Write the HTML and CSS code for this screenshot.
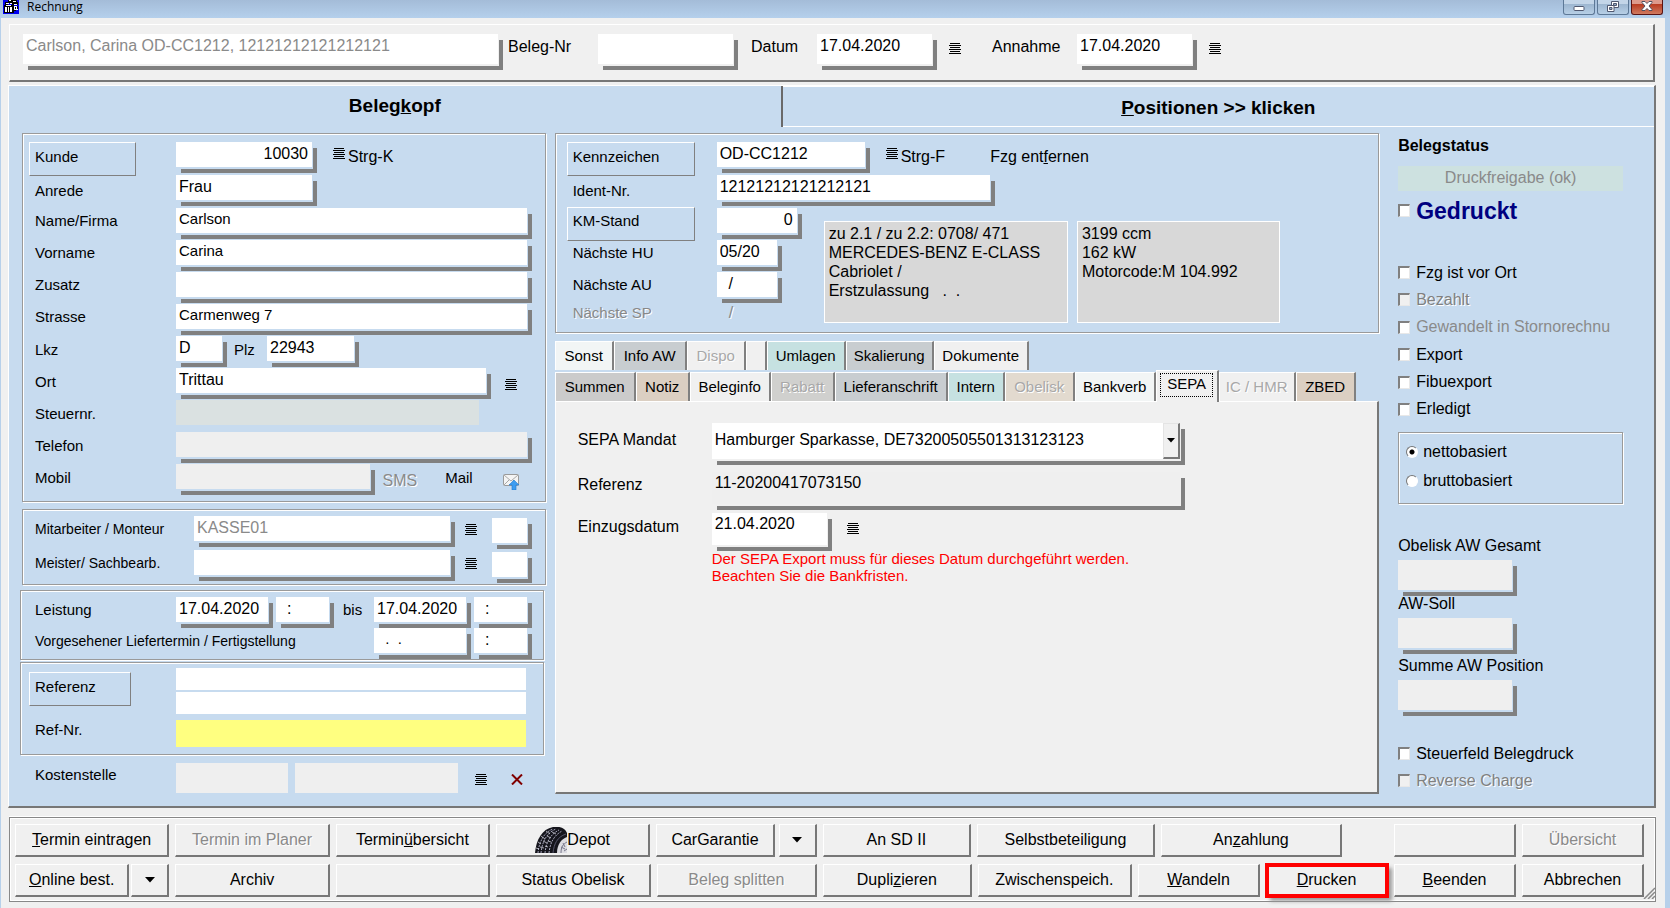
FILE: index.html
```
<!DOCTYPE html>
<html lang="de">
<head>
<meta charset="utf-8">
<title>Rechnung</title>
<link rel="stylesheet" href="styles.css">
</head>
<body>
<svg class="defs" aria-hidden="true">
  <symbol id="i-list" viewBox="0 0 12 11"><path d="M1 .5h10M0 2.5h12M1 4.5h10M0 6.5h12M1 8.5h10M0 10.5h12" stroke="#000" fill="none"/></symbol>
  <symbol id="i-down" viewBox="0 0 10 6"><path d="M0 0h10L5 5.500z" fill="#000"/></symbol>
</svg>

<header class="titlebar">
  <svg class="app-icon" width="16" height="14" viewBox="0 0 16 14" aria-hidden="true">
    <rect width="16" height="14" fill="#0000f0"/>
    <path d="M5 0h4v3h-4zM9 0h5v2h1v3h-6zM2 2h3v3h-3z" fill="#000"/>
    <path d="M6 0h2v1h-2zM10 1h3v1h-3zM3 3h3v1h-3zM7 3h2v1h-2zM11 4h3v1h-3z" fill="#fff"/>
    <path d="M1 5h10v8h-10z" fill="#000"/>
    <path d="M2 7h2v5h-2zM5 7h1v5h-1zM7 7h2v5h-2zM3 5h5v1h-5zM11 6h4v4h-4z" fill="#fff"/>
    <path d="M12 7h1v2h-1zM14 6h1v3h-1zM10 10h3v1h-3z" fill="#000"/>
  </svg>
  <h1>Rechnung</h1>
  <div class="win-buttons">
    <button type="button" aria-label="Minimieren"><svg width="12" height="11" viewBox="0 0 12 11"><rect x="1" y="5.500" width="10" height="4" rx="1" fill="#fff" stroke="#505870"/></svg></button>
    <button type="button" aria-label="Wiederherstellen"><svg width="12" height="11" viewBox="0 0 12 11"><path d="M4.500 .5h7v6h-7z" fill="#fff" stroke="#505870"/><path d="M6.500 2.500h3v2h-3z" fill="#8fa8c4" stroke="#505870"/><path d="M.5 4.500h6.500v6h-6.500z" fill="#fff" stroke="#505870"/><path d="M2.500 6.500h2.500v2h-2.500z" fill="#8fa8c4" stroke="#505870"/></svg></button>
    <button type="button" class="close" aria-label="Schließen"><svg width="12" height="10" viewBox="0 0 12 10"><path d="M1 .5h3l2 2 2-2h3v1l-3 3.500 3 3.500v1h-3l-2-2-2 2h-3v-1l3-3.500-3-3.500z" fill="#fff" stroke="#505060"/></svg></button>
  </div>
</header>

<form class="client">
  <section class="head-panel">
    <input class="field head-name" aria-label="Beleg" value="Carlson, Carina OD-CC1212, 12121212121212121" disabled>
    <label class="head-nr-label" for="belegnr">Beleg-Nr</label>
    <input class="field head-nr" id="belegnr">
    <label class="head-date-label" for="datum">Datum</label>
    <input class="field head-date" id="datum" value="17.04.2020">
    <button type="button" class="icon" aria-label="Datum wählen"><svg width="12" height="11"><use href="#i-list"/></svg></button>
    <label class="head-accept-label" for="annahme">Annahme</label>
    <input class="field head-date" id="annahme" value="17.04.2020">
    <button type="button" class="icon" aria-label="Annahme wählen"><svg width="12" height="11"><use href="#i-list"/></svg></button>
  </section>

  <main class="sheet">
    <nav class="main-tabs">
      <button type="button" class="tab-left">Beleg<u>k</u>opf</button>
      <button type="button" class="tab-right"><u>P</u>ositionen &gt;&gt; klicken</button>
    </nav>
    <div class="columns">
      <div class="col-left">
        <section class="group customer">
          <div class="row tall"><div class="cap"><button type="button" class="cap-btn">Kunde</button></div><input class="field w-136 right" aria-label="Kundennummer" value="10030"><button type="button" class="shortcut"><svg width="12" height="11"><use href="#i-list"/></svg>Strg-K</button></div>
          <div class="row tall"><label class="cap low" for="anrede">Anrede</label><input class="field w-136" id="anrede" value="Frau"></div>
          <div class="row"><label class="cap" for="name">Name/Firma</label><input class="field grow small" id="name" value="Carlson"></div>
          <div class="row"><label class="cap" for="vorname">Vorname</label><input class="field grow small" id="vorname" value="Carina"></div>
          <div class="row"><label class="cap" for="zusatz">Zusatz</label><input class="field grow small" id="zusatz"></div>
          <div class="row"><label class="cap" for="strasse">Strasse</label><input class="field grow small" id="strasse" value="Carmenweg 7"></div>
          <div class="row"><label class="cap mid" for="lkz">Lkz</label><input class="field w-46" id="lkz" value="D"><label class="plz-label" for="plz">Plz</label><input class="field w-87" id="plz" value="22943"></div>
          <div class="row"><label class="cap mid" for="ort">Ort</label><input class="field grow" id="ort" value="Trittau"><button type="button" class="icon city" aria-label="Ort wählen"><svg width="12" height="11"><use href="#i-list"/></svg></button></div>
          <div class="row"><label class="cap mid" for="steuernr">Steuernr.</label><input class="field flat tax" id="steuernr" disabled></div>
          <div class="row"><label class="cap mid" for="telefon">Telefon</label><input class="field grow gray" id="telefon"></div>
          <div class="row"><label class="cap mid" for="mobil">Mobil</label><input class="field grow gray" id="mobil"><button type="button" class="text-btn sms" disabled>SMS</button><span class="mail-label">Mail</span><button type="button" class="icon mail" aria-label="Mail senden"><svg width="18" height="17" viewBox="0 0 18 17"><rect x=".5" y="1.500" width="15" height="11" rx="1" fill="#f4f4f4" stroke="#9a9a9a"/><path d="M1 2l7 6 7-6M1 12l5-5M15 12l-5-5" fill="none" stroke="#a8a8a8"/><path d="M11 7l5 5h-3v5h-4v-5h-3z" fill="#3d9cf0" stroke="#1f7ad0" stroke-width=".6"/></svg></button></div>
        </section>

        <section class="group staff">
          <div class="row"><label class="cap wide" for="monteur">Mitarbeiter / Monteur</label><input class="field grow" id="monteur" value="KASSE01" disabled><button type="button" class="icon" aria-label="Mitarbeiter wählen"><svg width="12" height="11"><use href="#i-list"/></svg></button><input class="field w-35" aria-label="Kürzel Mitarbeiter"></div>
          <div class="row"><label class="cap wide" for="meister">Meister/ Sachbearb.</label><input class="field grow" id="meister"><button type="button" class="icon" aria-label="Meister wählen"><svg width="12" height="11"><use href="#i-list"/></svg></button><input class="field w-35" aria-label="Kürzel Meister"></div>
        </section>

        <section class="group service">
          <div class="row"><label class="cap" for="leistung">Leistung</label><input class="field w-92" id="leistung" value="17.04.2020"><input class="field w-53 time" aria-label="Uhrzeit von" value="  :"><label class="bis" for="bis">bis</label><input class="field w-92" id="bis" value="17.04.2020"><input class="field w-53 time" aria-label="Uhrzeit bis" value="  :"></div>
          <div class="row"><label class="cap delivery" for="termin">Vorgesehener Liefertermin / Fertigstellung</label><input class="field w-92 small" id="termin" value="  .  ."><input class="field w-53 time" aria-label="Uhrzeit Liefertermin" value="  :"></div>
        </section>

        <section class="group reference">
          <div class="ref-row"><div class="cap"><button type="button" class="cap-btn ref">Referenz</button></div><div class="ref-inputs"><input class="field flat" aria-label="Referenz Zeile 1"><input class="field flat" aria-label="Referenz Zeile 2"></div></div>
          <div class="ref-row"><label class="cap" for="refnr">Ref-Nr.</label><input class="field flat grow yellow" id="refnr"></div>
        </section>

        <div class="cost-row">
          <label class="cap" for="kosten">Kostenstelle</label>
          <input class="field flat gray cost-code" id="kosten"><input class="field flat gray grow" aria-label="Bezeichnung Kostenstelle">
          <button type="button" class="icon" aria-label="Kostenstelle wählen"><svg width="12" height="11"><use href="#i-list"/></svg></button>
          <button type="button" class="icon clear" aria-label="Kostenstelle löschen"><svg width="12" height="11" viewBox="0 0 12 11"><path d="M1 .5l10 10M11 .5L1 10.500" stroke="#800000" stroke-width="2" fill="none"/></svg></button>
        </div>
      </div>

      <div class="col-mid">
        <section class="group vehicle">
          <div class="row tall"><div class="cap"><button type="button" class="cap-btn">Kennzeichen</button></div><input class="field w-148" aria-label="Kennzeichen" value="OD-CC1212"><button type="button" class="shortcut"><svg width="12" height="11"><use href="#i-list"/></svg>Strg-F</button><button type="button" class="text-btn remove">Fzg ent<u>f</u>ernen</button></div>
          <div class="row tall"><label class="cap low" for="ident">Ident-Nr.</label><input class="field w-273" id="ident" value="12121212121212121"></div>
          <div class="vehicle-body">
            <div class="vehicle-dates">
              <div class="row"><div class="cap"><button type="button" class="cap-btn km">KM-Stand</button></div><input class="field w-80 right" aria-label="KM-Stand" value="0"></div>
              <div class="row"><label class="cap" for="hu">Nächste HU</label><input class="field w-60" id="hu" value="05/20"></div>
              <div class="row"><label class="cap" for="au">Nächste AU</label><input class="field w-60" id="au" value="  /"></div>
              <div class="row"><span class="cap dim">Nächste SP</span><span class="dim sp">/</span></div>
            </div>
            <div class="info info-car">zu 2.1 / zu 2.2: 0708/ 471<br>MERCEDES-BENZ E-CLASS<br>Cabriolet /<br>Erstzulassung &nbsp; . &nbsp;.</div>
            <div class="info info-engine">3199 ccm<br>162 kW<br>Motorcode:M 104.992</div>
          </div>
        </section>

        <div class="tabs">
          <nav class="tab-row first">
            <button type="button" class="tab pale">Sonst</button><button type="button" class="tab steel">Info AW</button><button type="button" class="tab" disabled>Dispo</button><button type="button" class="tab" aria-label="Leer"></button><button type="button" class="tab mint">Umlagen</button><button type="button" class="tab steel">Skalierung</button><button type="button" class="tab">Dokumente</button>
          </nav>
          <nav class="tab-row second">
            <button type="button" class="tab silver">Summen</button><button type="button" class="tab tan">Notiz</button><button type="button" class="tab">Beleginfo</button><button type="button" class="tab silver" disabled>Rabatt</button><button type="button" class="tab steel">Lieferanschrift</button><button type="button" class="tab mint">Intern</button><button type="button" class="tab sand" disabled>Obelisk</button><button type="button" class="tab pale">Bankverb</button><button type="button" class="tab active"><span>SEPA</span></button><button type="button" class="tab" disabled>IC / HMR</button><button type="button" class="tab tan">ZBED</button>
          </nav>
          <section class="tab-page">
            <label for="mandat">SEPA Mandat</label>
            <div class="mandate"><select class="field" id="mandat"><option>Hamburger Sparkasse, DE73200505501313123123</option></select><span class="drop" aria-hidden="true"><svg width="8" height="5" viewBox="0 0 10 6"><use href="#i-down"/></svg></span></div>
            <label for="sepa-ref">Referenz</label>
            <input class="field gray sepa-ref" id="sepa-ref" value="11-20200417073150">
            <label for="einzug">Einzugsdatum</label>
            <div class="debit"><input class="field" id="einzug" value="21.04.2020"><button type="button" class="icon" aria-label="Einzugsdatum wählen"><svg width="12" height="11"><use href="#i-list"/></svg></button></div>
            <p class="warning">Der SEPA Export muss für dieses Datum durchgeführt werden.<br>Beachten Sie die Bankfristen.</p>
          </section>
        </div>
      </div>

      <aside class="col-right">
        <h2>Belegstatus</h2>
        <div class="release">Druckfreigabe (ok)</div>
        <label class="check printed"><input type="checkbox">Gedruckt</label>
        <div class="checks">
          <label class="check"><input type="checkbox">Fzg ist vor Ort</label>
          <label class="check emboss"><input type="checkbox" disabled>Bezahlt</label>
          <label class="check off"><input type="checkbox">Gewandelt in Stornorechnu</label>
          <label class="check"><input type="checkbox">Export</label>
          <label class="check"><input type="checkbox">Fibuexport</label>
          <label class="check"><input type="checkbox">Erledigt</label>
        </div>
        <div class="group basis">
          <label><input type="radio" name="basis" checked>nettobasiert</label>
          <label><input type="radio" name="basis">bruttobasiert</label>
        </div>
        <div class="sums">
          <label for="awg">Obelisk AW Gesamt</label><input class="field gray" id="awg">
          <label for="aws">AW-Soll</label><input class="field gray" id="aws">
          <label class="gap" for="awp">Summe AW Position</label><input class="field gray" id="awp">
        </div>
        <label class="check"><input type="checkbox">Steuerfeld Belegdruck</label>
        <label class="check emboss"><input type="checkbox" disabled>Reverse Charge</label>
      </aside>
    </div>
  </main>

  <footer class="actions">
    <div class="action-row">
      <button type="button" class="btn f-154"><span><u>T</u>ermin eintragen</span></button>
      <button type="button" class="btn f-154" disabled>Termin im Planer</button>
      <button type="button" class="btn f-154"><span>Termin<u>ü</u>bersicht</span></button>
      <button type="button" class="btn f-154 depot"><svg width="32" height="26" viewBox="0 0 32 26" aria-hidden="true">
        <path d="M0 26C1 13 7 2 18 0c7-1 12 1 14 6v20z" fill="#15151c"/>
        <path d="M22 26c0-8 4-14 10-16v16z" fill="#dcdce2"/>
        <path d="M26 26c0-6 2-9 6-11M28 16l2 4M26 20l4 2M29 24l3-2" fill="none" stroke="#77778a"/>
        <path d="M3 26C4 15 9 5 18 2M6 26C7 16 11 6 21 2M10 26C11 17 14 8 24 3M14 26C15 17 18 9 27 4" fill="none" stroke="#a4a4ba" stroke-dasharray="2 1"/>
        <path d="M18 26C19 17 22 10 31 7" fill="none" stroke="#55556a"/>
        <path d="M1 21l3 1M3 15l3 2M6 9l4 3M11 4l4 3M5 20l4 1M8 14l4 2M12 9l4 2M17 5l4 2M10 19l3 1M13 14l3 1" stroke="#e0e0ea" stroke-width=".7" fill="none"/>
      </svg>Depot</button>
      <div class="split f-163"><button type="button" class="btn f-121">CarGarantie</button><button type="button" class="btn arrow" aria-label="CarGarantie Auswahl"><svg width="10" height="6"><use href="#i-down"/></svg></button></div>
      <button type="button" class="btn f-148">An SD II</button>
      <button type="button" class="btn f-178">Selbstbeteiligung</button>
      <button type="button" class="btn f-181"><span>An<u>z</u>ahlung</span></button>
      <span class="spacer"></span>
      <button type="button" class="btn f-121" aria-label="Frei"></button>
      <button type="button" class="btn f-121" disabled>Übersicht</button>
    </div>
    <div class="action-row">
      <div class="split tight f-157"><button type="button" class="btn f-121"><span><u>O</u>nline best.</span></button><button type="button" class="btn arrow" aria-label="Online Auswahl"><svg width="10" height="6"><use href="#i-down"/></svg></button></div>
      <button type="button" class="btn f-154">Archiv</button>
      <button type="button" class="btn f-154" aria-label="Frei"></button>
      <button type="button" class="btn f-154">Status Obelisk</button>
      <button type="button" class="btn f-160" disabled>Beleg splitten</button>
      <button type="button" class="btn f-148"><span>Dupli<u>z</u>ieren</span></button>
      <button type="button" class="btn f-154">Zwischenspeich.</button>
      <button type="button" class="btn f-121"><span><u>W</u>andeln</span></button>
      <button type="button" class="btn f-121 marked"><span><u>D</u>rucken</span></button>
      <button type="button" class="btn f-121"><span><u>B</u>eenden</span></button>
      <button type="button" class="btn f-121">Abbrechen</button>
    </div>
    <svg class="grip" width="12" height="12" viewBox="0 0 12 12" aria-hidden="true"><path d="M1 12L12 1M5 12l7-7M9 12l3-3" stroke="#8a8a8a" stroke-width="1.500"/></svg>
  </footer>
</form>
</body>
</html>
```
FILE: styles.css
```
:root {
  --blue: #c7dbef;
  --face: #f0f0f0;
  --shade: #808080;
  --dark: #696969;
  --bg: var(--blue);
}

* { box-sizing: border-box; }

body {
  margin: 0;
  min-height: 100vh;
  display: flex;
  flex-direction: column;
  background: #b7d0ea;
  font: 16px/18px "Liberation Sans", Arial, sans-serif;
  color: #000;
}

button, input, select { font: inherit; color: inherit; margin: 0; border-radius: 0; }
button { background: none; border: 0; padding: 0; }
svg { display: block; flex: none; }
.defs { position: absolute; width: 0; height: 0; }

/* Title bar */
.titlebar {
  display: flex;
  align-items: flex-start;
  height: 18px;
  padding: 0 7px 0 3px;
  background: linear-gradient(#a4bcd8, #b5d0ec);
}
.titlebar h1 {
  flex: 1;
  margin: 0 0 0 8px;
  font: 12px/14px "Open Sans", "Noto Sans", sans-serif;
}
.win-buttons { display: flex; gap: 2px; }
.win-buttons button {
  display: flex;
  justify-content: center;
  width: 32px;
  height: 15px;
  padding-top: 1px;
  border: 1px solid #5d7896;
  border-top: 0;
  border-radius: 0 0 3px 3px;
  background: linear-gradient(#c3d5e8 30%, #9db6d0 31%, #b7cfe6);
}
.win-buttons .close {
  border-color: #5a1414;
  background: linear-gradient(#dd9a8c 30%, #b83c22 31%, #d07a60);
}

/* Client area */
.client {
  --bg: var(--face);
  flex: 1;
  margin: 0 5px 0 1px;
  padding: 6px 9px 0 7px;
  background: var(--face);
}

.field {
  min-width: 0;
  height: 25px;
  padding: 0 4px 1px 3px;
  border: 0;
  outline: 0;
  background: #fff;
  box-shadow: 1px 2px 0 var(--bg), 5px 6px 0 var(--shade);
}
.field:disabled { color: #8a8a8a; }
.field.small { font-size: 15px; padding-bottom: 4px; }
.field.flat { box-shadow: none; }
.field.gray { background: #efefef; }
.field.yellow { background: #ffff80; height: 27px; }
.field.right { text-align: right; }
.grow { flex: 1; }
.w-35 { width: 35px; }
.w-46 { width: 46px; }
.w-53 { width: 53px; }
.w-60 { width: 60px; }
.w-80 { width: 80px; }
.w-87 { width: 87px; }
.w-92 { width: 92px; }
.w-136 { width: 136px; }
.w-148 { width: 148px; }
.w-273 { width: 273px; }
.icon { display: flex; flex: none; }

.head-panel {
  display: flex;
  align-items: flex-start;
  height: 58px;
  margin: 0 1px;
  padding: 9px 13px;
  border: solid;
  border-width: 1px 2px 2px 1px;
  border-color: #fff #777 #777 #fff;
}
.head-panel .field { height: 30px; padding-bottom: 7px; }
.head-panel label { padding-top: 4px; }
.head-panel .icon { margin: 9px 0 0 17px; }
.head-name { width: 475px; }
.head-nr-label { width: 90px; margin-left: 10px; }
.head-nr { width: 135px; }
.head-date-label { width: 66px; margin-left: 18px; }
.head-date { width: 115px; }
.head-accept-label { width: 85px; margin-left: 31px; }

/* Main sheet */
.sheet {
  --bg: var(--blue);
  margin-top: 3px;
  padding-bottom: 12px;
  background: var(--blue);
  border: solid;
  border-width: 1px 2px 2px 1px;
  border-color: #fff #777 #777 #fff;
}
.main-tabs { display: flex; height: 41px; }
.main-tabs button { font-size: 19px; line-height: 22px; font-weight: bold; }
.main-tabs .tab-left { flex: 773 1 0; padding-bottom: 2px; border-right: 2px solid var(--dark); }
.main-tabs .tab-right { flex: 873 1 0; padding-top: 3px; border-bottom: 1px solid #fff; box-shadow: inset 0 1px 0 #fff; }

.columns {
  display: grid;
  grid-template-columns: minmax(0, 526fr) minmax(0, 834fr) minmax(0, 275fr);
  padding: 6px 0 0 11px;
}
.col-left { display: flex; flex-direction: column; }
.col-mid { display: flex; flex-direction: column; margin-left: 9px; }
.col-right { padding-left: 19px; }

.group { border: 1px solid #9a9a9a; box-shadow: inset 1px 1px 0 #fff, 1px 1px 0 #fff; }
.row { display: flex; height: 32px; }
.row.tall { height: 33px; }
.cap { flex: none; width: 141px; padding-top: 4px; font-size: 15px; white-space: nowrap; }
.cap.mid { padding-top: 5px; }
.cap.low { padding-top: 7px; }
.cap.wide { width: 159px; font-size: 14px; }
.cap.delivery { width: 339px; font-size: 14px; }
div.cap { padding-top: 0; }
.cap-btn {
  display: block;
  width: 107px;
  height: 34px;
  margin-left: -6px;
  padding: 0 0 4px 5px;
  text-align: left;
  border: 1px solid;
  border-color: #fff var(--shade) var(--shade) #fff;
}
.cap-btn.km { margin-top: -1px; padding-bottom: 6px; }
.shortcut { display: flex; gap: 3px; align-self: flex-start; margin: 6px 0 0 21px; }
.dim { color: #888; text-shadow: 1px 1px 0 #fff; }
.text-btn { align-self: flex-start; }
.text-btn:disabled { color: #8a8a8a; text-shadow: 1px 1px 0 #fff; }

.customer { margin-left: 2px; padding: 8px 18px 5px 12px; }
.plz-label { padding: 5px 0 0 12px; width: 45px; font-size: 15px; }
.icon.city { margin: 11px 10px 0 19px; }
.tax { width: 303px; }
.field.tax { background: #dae1e1; }
.sms { margin: 8px 28px 0 12px; }
.mail-label { padding-top: 5px; font-size: 15px; }
.icon.mail { margin: 9px 6px 0 30px; }

.staff { margin: 7px 0 0 2px; padding: 6px 18px 0 12px; }
.staff .row { height: 34px; }
.staff .icon { margin: 8px 15px 0; }
.staff .w-35 { margin-top: 2px; }

.service { margin: 5px 2px 0 0; padding: 6px 15px 0 14px; }
.service .row { height: 31px; }
.service .time { margin-left: 8px; padding-left: 2px; white-space: pre; }
.service input { white-space: pre; }
.bis { width: 45px; padding: 4px 0 0 14px; font-size: 15px; }

.reference { margin: 2px 2px 0 0; padding: 5px 17px 7px 14px; }
.ref-row { display: flex; }
.ref-row + .ref-row { margin-top: 6px; }
.cap-btn.ref { width: 102px; margin-top: 4px; }
.ref-inputs { display: flex; flex-direction: column; gap: 2px; flex: 1; }
.ref-inputs .field { height: 22px; }
.ref-row label.cap { padding-top: 1px; }

.cost-row { display: flex; padding: 8px 23px 0 15px; }
.cost-row .cap { padding-top: 3px; }
.cost-row .field { height: 30px; }
.cost-code { width: 112px; margin-right: 7px; }
.cost-row .icon { margin: 11px 0 0 17px; }
.cost-row .icon.clear { margin-left: 24px; }

/* Vehicle */
.vehicle { padding: 8px 98px 8px 17px; }
.vehicle .cap { width: 144px; }
.vehicle .cap-btn { width: 128px; }
.remove { margin: 6px 0 0 45px; }
.vehicle-body { display: flex; }
.vehicle-dates { width: 251px; flex: none; }
.vehicle-dates .row:last-child { height: 20px; }
.vehicle-dates .row:last-child .cap { padding-top: 0; }
.vehicle-dates .field { white-space: pre; }
.sp { padding-left: 12px; }
.info {
  height: 102px;
  margin-top: 13px;
  padding: 2px 4px;
  line-height: 19px;
  background: #d8d8d8;
  border: 1px solid #fff;
  white-space: nowrap;
}
.info-car { flex: 245 1 0; }
.info-engine { flex: 202 1 0; margin-left: 9px; }

/* Sub tabs */
.tabs { display: flex; flex-direction: column; flex: 1; margin-top: 8px; }
.tab-row { display: grid; height: 29px; }
.tab-row.first { grid-template-columns: 59px 73px 59px 21px 79px 88px 95px; }
.tab-row.second { margin-top: 2px; grid-template-columns: 81px 54px 81px 64px 113px 57px 70px 81px 63px 77px 60px; }
.tab {
  min-width: 0;
  font-size: 15px;
  white-space: nowrap;
  background: var(--face);
  border: solid;
  border-width: 1px 2px 0 1px;
  border-color: #fff var(--shade) #fff #fff;
}
.tab:disabled { color: #a8a8a8; text-shadow: 1px 1px 0 #fff; }
.tab.pale { background: #f2f5f5; }
.tab.steel { background: #c8cdd0; }
.tab.mint { background: #c6e1e1; }
.tab.silver { background: #cbcbcb; }
.tab.silver:disabled { background: #d0d0ce; }
.tab.tan { background: #dbcfc2; }
.tab.sand { background: #e2dacf; }
.tab.active { position: relative; z-index: 1; margin: -2px 0 -1px; padding-bottom: 3px; }
.tab.active span { display: inline-block; padding: 1px 6px 3px; border: 1px dotted #000; }
.tab-page {
  --bg: var(--face);
  flex: 1;
  display: grid;
  grid-template-columns: 134px minmax(0, 468px);
  grid-template-rows: 49px 41px 34px auto;
  align-content: start;
  padding: 21px 22px 0;
  background: var(--face);
  border: solid;
  border-width: 1px 2px 2px 1px;
  border-color: #fff #777 #777 #fff;
}
.tab-page label { padding-top: 8px; }
.tab-page label[for="sepa-ref"] { padding-top: 4px; }
.tab-page label[for="einzug"] { padding-top: 5px; }
.mandate { position: relative; height: 36px; }
.mandate select { appearance: none; width: 100%; height: 36px; padding-bottom: 2px; }
.drop {
  position: absolute;
  top: 0;
  right: 0;
  display: grid;
  place-items: center;
  width: 17px;
  height: 36px;
  background: var(--face);
  border: solid;
  border-width: 1px 2px 2px 1px;
  border-color: #e4e4e4 #777 #777 #e4e4e4;
  pointer-events: none;
}
.sepa-ref { height: 32px; padding-bottom: 10px; }
.debit { display: flex; }
.debit .field { width: 115px; height: 32px; padding-bottom: 10px; }
.debit .icon { margin: 10px 0 0 20px; }
.warning { grid-column: 2; margin: 3px 0 0; font-size: 15px; line-height: 17px; color: #f00; }

/* Status column */
.col-right h2 { margin: 4px 0 11px; font-size: 16px; line-height: 18px; }
.release {
  width: 225px;
  max-width: 100%;
  height: 25px;
  padding-top: 3px;
  text-align: center;
  color: #8a8a8a;
  background: #cde1e0;
}
.check { display: flex; align-items: center; gap: 6px; height: 27px; white-space: nowrap; }
.check.emboss { color: #808080; text-shadow: 1px 1px 0 #fff; }
.check.off { color: #8a8a8a; }
.check.printed { margin-top: 6px; font-size: 23px; font-weight: bold; color: #000080; }
.check input {
  appearance: none;
  width: 12px;
  height: 13px;
  background: #fff;
  border: solid;
  border-width: 2px 1px 1px 2px;
  border-color: var(--shade) #e8e8e8 #e8e8e8 var(--shade);
}
.check input:disabled { background: var(--face); }
.checks { display: flex; flex-direction: column; justify-content: space-between; height: 164px; margin-top: 35px; }
.basis { width: 225px; max-width: 100%; height: 72px; margin: 9px 0 33px; padding: 4px 7px; }
.basis label { display: flex; align-items: center; gap: 5px; height: 29px; }
.basis input {
  appearance: none;
  width: 12px;
  height: 12px;
  border: 1px solid;
  border-color: #777 #fff #fff #777;
  border-radius: 50%;
  background: #fff;
}
.basis input:checked { background: radial-gradient(circle, #000 2px, #fff 3px); }
.sums { display: flex; flex-direction: column; align-items: flex-start; margin-bottom: 25px; }
.sums label { margin-bottom: 5px; }
.sums .field { width: 114px; height: 30px; margin-bottom: 5px; }
.sums label.gap { margin-top: 4px; }

/* Action buttons */
.actions {
  position: relative;
  display: flex;
  flex-direction: column;
  gap: 7px;
  margin: 9px 0 0 1px;
  padding: 6px 11px 4px 5px;
  border: 1px solid #888;
  box-shadow: inset 1px 1px 0 #fff, inset -1px -1px 0 #fff, 0 -1px 0 #fff;
}
.action-row { display: flex; gap: 6px; height: 33px; }
.btn {
  display: flex;
  align-items: center;
  justify-content: center;
  height: 33px;
  min-width: 0;
  white-space: nowrap;
  background: var(--face);
  border: solid;
  border-width: 1px 2px 2px 1px;
  border-color: #fff #777 #777 #fff;
}
.btn:disabled { color: #8a8a8a; text-shadow: 1px 1px 0 #fff; }
.split { display: flex; gap: 4px; }
.split.tight { gap: 2px; }
.btn.arrow { width: 38px; flex: none; }
.spacer { flex: 41 1 0; }
.f-121 { flex: 121 1 0; }
.f-148 { flex: 148 1 0; }
.f-154 { flex: 154 1 0; }
.f-157 { flex: 157 1 0; }
.f-160 { flex: 160 1 0; }
.f-163 { flex: 163 1 0; }
.f-178 { flex: 178 1 0; }
.f-181 { flex: 181 1 0; }
.btn.marked { outline: 4px solid #f00; outline-offset: -3px; box-shadow: 4px 4px 4px #999; }
.grip { position: absolute; right: 0; bottom: 2px; }
```
